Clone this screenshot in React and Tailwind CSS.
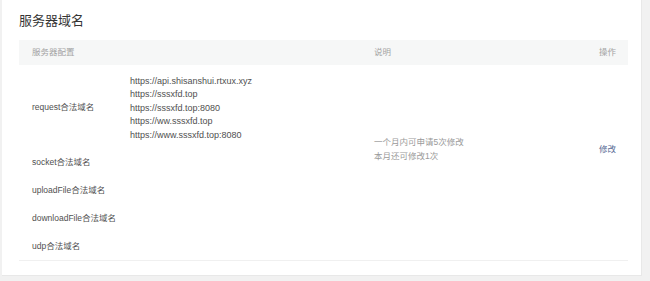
const urls = [
  'https://api.shisanshui.rtxux.xyz',
  'https://sssxfd.top',
  'https://sssxfd.top:8080',
  'https://ww.sssxfd.top',
  'https://www.sssxfd.top:8080',
];

const otherDomains = ['socket合法域名', 'uploadFile合法域名', 'downloadFile合法域名', 'udp合法域名'];

export default function App() {
  return (
    <div
      className="w-[650px] h-[281px] bg-[#f1f1f1] overflow-hidden"
      style={{ fontFamily: '"Liberation Sans", "Noto Sans CJK SC", sans-serif' }}
    >
      <div className="ml-[2px] w-[640px] h-[276px] bg-white border-r border-b border-[#e8e8e8] pl-[17px] pr-[13px]">
        <h2 className="pt-[12px] h-[40px] text-[13px] leading-[18px] text-[#353535]">服务器域名</h2>

        {/* 表头 */}
        <div className="flex h-[25px] items-center bg-[#f6f7f7] text-[8.5px] text-[#a3a3a3]">
          <div className="w-[355px] pl-[13px]">服务器配置</div>
          <div className="flex-1">说明</div>
          <div className="pr-[12px]">操作</div>
        </div>

        {/* 表体 */}
        <div className="flex border-b border-[#f0f0f0] text-[8.5px]">
          <div className="w-[355px] text-[#505050]">
            <div className="flex items-center h-[83px]">
              <div className="w-[111px] pl-[13px] pt-[1px]">request合法域名</div>
              <div className="flex flex-col text-[9px] pt-[4px]">
                {urls.map((u) => (
                  <div key={u} className="leading-[13.5px]">{u}</div>
                ))}
              </div>
            </div>
            {otherDomains.map((d) => (
              <div key={d} className="flex items-center h-[28px] pl-[13px]">{d}</div>
            ))}
          </div>
          <div className="flex-1 pt-[70px] text-[#9a9a9a] leading-[14px]">
            <div>一个月内可申请5次修改</div>
            <div>本月还可修改1次</div>
          </div>
          <div className="pt-[77px] pr-[12px] leading-[14px]">
            <a className="text-[#576b95]">修改</a>
          </div>
        </div>
      </div>
    </div>
  );
}
